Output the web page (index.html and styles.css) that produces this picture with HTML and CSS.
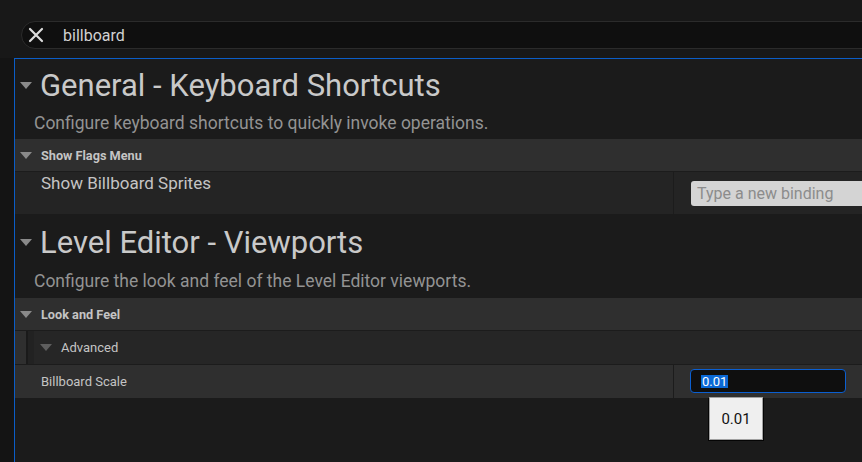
FILE: index.html
```html
<!DOCTYPE html>
<html>
<head>
<meta charset="utf-8">
<link rel="stylesheet" href="styles.css">
</head>
<body>
<div class="top">
  <div class="search">
    <svg class="clear" width="16" height="16" viewBox="0 0 16 16"><path d="M2 2 L14 14 M14 2 L2 14" stroke="#dcdcdc" stroke-width="2.2" stroke-linecap="round"/></svg>
    <span class="query">billboard</span>
  </div>
</div>
<div class="panel">
  <div class="section-head first">
    <div class="title"><span class="tri big"></span>General - Keyboard Shortcuts</div>
    <div class="desc">Configure keyboard shortcuts to quickly invoke operations.</div>
  </div>
  <div class="cat"><span class="tri"></span>Show Flags Menu</div>
  <div class="row tall">
    <div class="label big-label">Show Billboard Sprites</div>
    <div class="value"><div class="binding">Type a new binding</div></div>
  </div>
  <div class="section-head second">
    <div class="title"><span class="tri big"></span>Level Editor - Viewports</div>
    <div class="desc">Configure the look and feel of the Level Editor viewports.</div>
  </div>
  <div class="cat"><span class="tri"></span>Look and Feel</div>
  <div class="subcat">
    <div class="indent"></div>
    <span class="tri dim"></span>Advanced
  </div>
  <div class="row hover">
    <div class="label">Billboard Scale</div>
    <div class="value">
      <div class="num"><span class="sel">0.01</span></div>
      <div class="tip">0.01</div>
    </div>
  </div>
</div>
</body>
</html>
```
FILE: styles.css
```css
html, body {
  margin: 0;
  height: 100%;
  overflow: hidden;
}
body {
  background: #181818;
  font-family: Roboto, "Liberation Sans", sans-serif;
  color: #c8c8c8;
  display: flex;
  flex-direction: column;
}
.top {
  flex: none;
  height: 58px;
  box-sizing: border-box;
  padding: 21px 0 0 21px;
}
.search {
  height: 28px;
  margin-right: -30px;
  box-sizing: border-box;
  border: 1.5px solid #2b2b2b;
  border-radius: 15px;
  background: #0f0f0f;
  display: flex;
  align-items: center;
  padding-left: 6px;
}
.clear { flex: none; }
.query {
  margin-left: 19px;
  font-size: 16px;
  color: #d2d2d2;
}
.panel {
  flex: 1;
  margin-left: 14px;
  border-top: 1px solid #0b5dc7;
  border-left: 1px solid #0b5dc7;
  background: #1b1b1b;
  box-shadow: -14px 0 0 #141414;
}
.section-head {
  padding-left: 5px;
  box-sizing: border-box;
}
.section-head.first { padding-top: 9px; height: 80px; }
.section-head.second { padding-top: 11px; height: 84px; }
.title {
  font-size: 31px;
  line-height: 36px;
  color: #c9c9c9;
  display: flex;
  align-items: center;
}
.desc {
  font-size: 17.5px;
  line-height: 22px;
  color: #939393;
  margin-top: 8px;
  padding-left: 14px;
}
.second .desc { margin-top: 9px; }
.tri {
  width: 0;
  height: 0;
  border-left: 6px solid transparent;
  border-right: 6px solid transparent;
  border-top: 7px solid #8a8a8a;
  margin-right: 9px;
  flex: none;
}
.tri.big { margin-right: 8px; margin-top: -2px; }
.tri.dim { border-top-color: #5e5e5e; }
.cat {
  height: 32px;
  background: #2f2f2f;
  border-bottom: 1px solid #1c1c1c;
  display: flex;
  align-items: center;
  padding-left: 5px;
  font-size: 12.7px;
  font-weight: bold;
  color: #c4c4c4;
}
.subcat {
  height: 33px;
  background: #262626;
  border-bottom: 1px solid #1c1c1c;
  display: flex;
  align-items: center;
  font-size: 13px;
  color: #c4c4c4;
}
.indent {
  width: 11px;
  height: 100%;
  background: #2f2f2f;
  border-right: 2px solid #1a1a1a;
  box-shadow: 6px 0 0 #222222;
  flex: none;
}
.subcat .tri { margin-left: 12px; margin-right: 9px; }
.row {
  display: flex;
  background: #242424;
}
.row.tall { height: 42px; }
.row.hover { height: 33px; background: #2f2f2f; }
.label {
  width: 659px;
  flex: none;
  box-sizing: border-box;
  padding-left: 26px;
  border-right: 1px solid #1c1c1c;
  font-size: 13px;
  color: #c4c4c4;
  display: flex;
  align-items: center;
}
.big-label {
  font-size: 17px;
  align-items: flex-start;
  padding-top: 1px;
  line-height: 20px;
}
.value {
  flex: 1;
  position: relative;
  padding-left: 16px;
}
.binding {
  margin-top: 9px;
  margin-left: 1px;
  height: 25px;
  background: #d4d4d4;
  border-radius: 3px 0 0 3px;
  color: #8c8c8c;
  font-size: 16px;
  line-height: 25px;
  padding-left: 6px;
}
.num {
  margin-top: 4px;
  width: 156px;
  height: 24px;
  box-sizing: border-box;
  border: 1.5px solid #0b5fd1;
  border-radius: 4px;
  background: #0f0f0f;
  padding-left: 10px;
  display: flex;
  align-items: center;
  font-size: 13px;
}
.sel {
  background: #0b69d6;
  color: #ffffff;
  line-height: 13px;
  padding: 0 1px;
}
.tip {
  position: absolute;
  left: 35px;
  top: 32px;
  width: 54px;
  height: 43px;
  box-sizing: border-box;
  background: #efefef;
  border: 1px solid #a0a0a0;
  box-shadow: 1px 1px 0 #050505, -1px 1px 0 #050505;
  color: #111;
  font-size: 15px;
  display: flex;
  align-items: center;
  justify-content: center;
}
```
